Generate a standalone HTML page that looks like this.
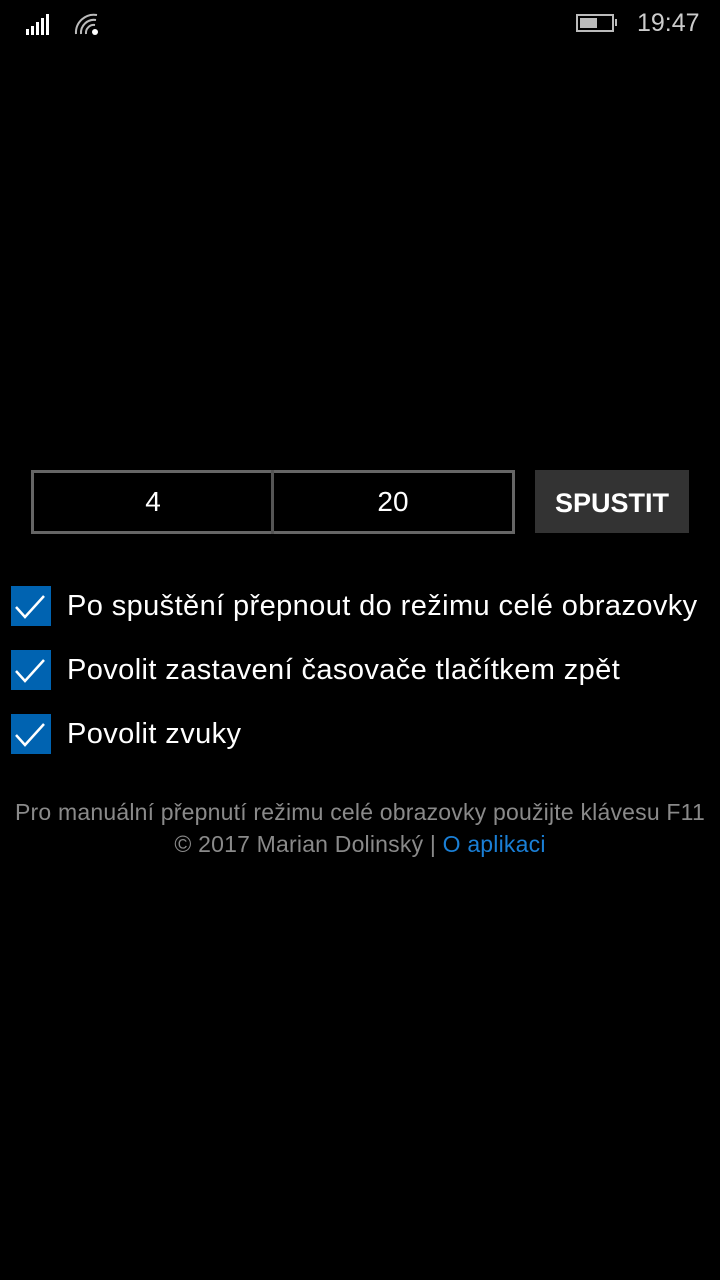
<!DOCTYPE html>
<html><head><meta charset="utf-8"><style>
body{margin:0;width:720px;height:1280px;background:#000;font-family:"Liberation Sans",sans-serif;color:#fff;position:relative;overflow:hidden}
.a{position:absolute}
.cb{position:absolute;left:11px;width:40px;height:40px;background:#0063b1}
.lbl{position:absolute;left:67px;font-size:29px;letter-spacing:0.4px;line-height:40px;white-space:nowrap}
</style></head><body>
<svg class="a" style="left:24px;top:12px" width="80" height="26">
<rect x="2" y="17" width="3" height="6" fill="#fff"/><rect x="7" y="14" width="3" height="9" fill="#fff"/><rect x="12" y="10" width="3" height="13" fill="#fff"/><rect x="17" y="6" width="3" height="17" fill="#fff"/><rect x="22" y="2" width="3" height="21" fill="#fff"/>
<g fill="none" stroke="#bbb" stroke-width="2"><path d="M52 22 A18 18 0 0 1 73 3"/><path d="M57 22 A13 13 0 0 1 72 8"/><path d="M62 22 A8 8 0 0 1 71 13"/></g><circle cx="71" cy="20" r="3" fill="#fff"/>
</svg>
<div class="a" style="left:576px;top:14px;width:38px;height:18px;border:2px solid #bbb;box-sizing:border-box"></div>
<div class="a" style="left:580px;top:18px;width:17px;height:10px;background:#bbb"></div>
<div class="a" style="left:615px;top:19px;width:2px;height:7px;background:#bbb"></div>
<div class="a" style="left:637px;top:9px;font-size:25px;color:#ccc">19:47</div>
<div class="a" style="left:31px;top:470px;width:484px;height:64px;border:3px solid #666;box-sizing:border-box"></div>
<div class="a" style="left:271px;top:470px;width:3px;height:64px;background:#555"></div>
<div class="a" style="left:34px;top:470px;width:238px;height:64px;line-height:64px;text-align:center;font-size:28px">4</div>
<div class="a" style="left:274px;top:470px;width:238px;height:64px;line-height:64px;text-align:center;font-size:28px">20</div>
<div class="a" style="left:535px;top:470px;width:154px;height:63px;background:#333;line-height:66px;text-align:center;font-size:27px;font-weight:bold">SPUSTIT</div>
<div class="cb" style="top:586px"></div><div class="cb" style="top:650px"></div><div class="cb" style="top:714px"></div>
<svg class="a" style="left:11px;top:586px" width="40" height="170"><g fill="none" stroke="#fff" stroke-width="2.5"><path d="M5 21 L14 31 L33 10"/><path d="M5 85 L14 95 L33 74"/><path d="M5 149 L14 159 L33 138"/></g></svg>
<div class="lbl" style="top:586px">Po spuštění přepnout do režimu celé obrazovky</div>
<div class="lbl" style="top:650px">Povolit zastavení časovače tlačítkem zpět</div>
<div class="lbl" style="top:714px">Povolit zvuky</div>
<div class="a" style="left:0;width:720px;top:796px;text-align:center;font-size:23px;letter-spacing:0.2px;line-height:32px;color:#8a8a8a;white-space:nowrap">Pro manuální přepnutí režimu celé obrazovky použijte klávesu F11<br>© 2017 Marian Dolinský | <span style="color:#1a7fd6">O aplikaci</span></div>
</body></html>
